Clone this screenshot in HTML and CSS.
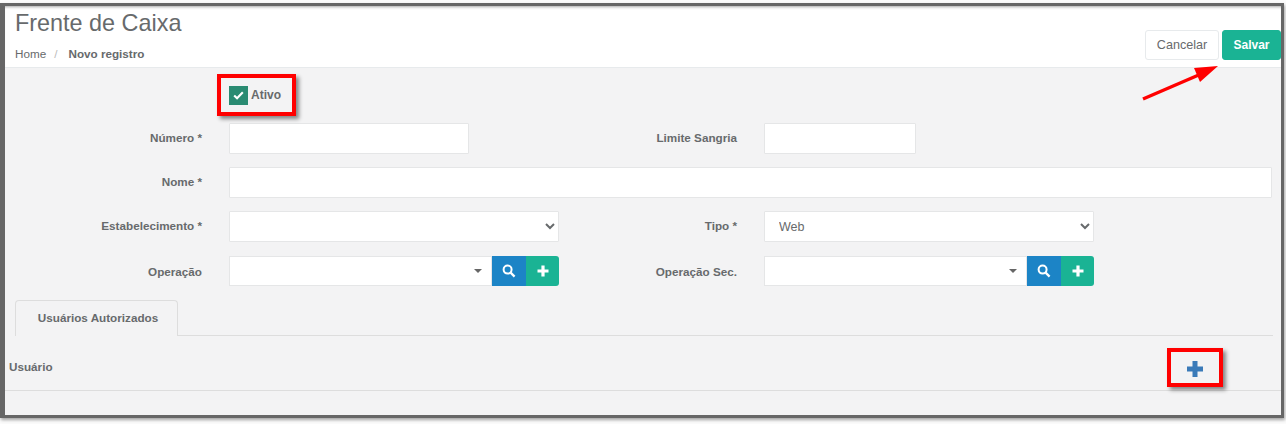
FILE: index.html
```html
<!DOCTYPE html>
<html lang="pt">
<head>
<meta charset="utf-8">
<title>Frente de Caixa</title>
<link rel="stylesheet" href="styles.css">
</head>
<body>
<div class="frame">
  <header class="top">
    <div class="top-text">
      <h1 class="title">Frente de Caixa</h1>
      <nav class="crumbs"><span>Home</span><span class="sep">/</span><strong>Novo registro</strong></nav>
    </div>
    <div class="actions">
      <button class="btn btn-cancel">Cancelar</button>
      <button class="btn btn-save">Salvar</button>
    </div>
  </header>
  <main class="content">
    <div class="check-row">
      <span class="check"><svg viewBox="0 0 12 10" width="11" height="9"><path d="M1.2 5 4.4 8 10.8 1.5" fill="none" stroke="#fff" stroke-width="2.4"/></svg></span>
      <span class="check-label">Ativo</span>
    </div>
    <div class="row">
      <div class="col">
        <label class="label">Número *</label>
        <input class="input w240" type="text">
      </div>
      <div class="col">
        <label class="label">Limite Sangria</label>
        <input class="input w152" type="text">
      </div>
    </div>
    <div class="row">
      <label class="label">Nome *</label>
      <input class="input w1043" type="text">
    </div>
    <div class="row row-sel">
      <div class="col">
        <label class="label">Estabelecimento *</label>
        <select class="input select"><option></option></select>
      </div>
      <div class="col">
        <label class="label">Tipo *</label>
        <select class="input select"><option>Web</option></select>
      </div>
    </div>
    <div class="row row-op">
      <div class="col">
        <label class="label">Operação</label>
        <div class="combo">
          <div class="combo-box"><span class="caret"></span></div>
          <button class="ic ic-blue"><svg viewBox="0 0 14 14" width="14" height="14"><circle cx="5.6" cy="5.6" r="4" fill="none" stroke="#fff" stroke-width="2"/><path d="M8.6 8.6 12.6 12.6" stroke="#fff" stroke-width="2.2"/></svg></button>
          <button class="ic ic-green"><svg viewBox="0 0 12 12" width="12" height="12"><path d="M6 .5v11M.5 6h11" stroke="#fff" stroke-width="3.2"/></svg></button>
        </div>
      </div>
      <div class="col">
        <label class="label">Operação Sec.</label>
        <div class="combo">
          <div class="combo-box"><span class="caret"></span></div>
          <button class="ic ic-blue"><svg viewBox="0 0 14 14" width="14" height="14"><circle cx="5.6" cy="5.6" r="4" fill="none" stroke="#fff" stroke-width="2"/><path d="M8.6 8.6 12.6 12.6" stroke="#fff" stroke-width="2.2"/></svg></button>
          <button class="ic ic-green"><svg viewBox="0 0 12 12" width="12" height="12"><path d="M6 .5v11M.5 6h11" stroke="#fff" stroke-width="3.2"/></svg></button>
        </div>
      </div>
    </div>
    <div class="tabs"><div class="tab">Usuários Autorizados</div></div>
    <div class="table-row">
      <span class="th">Usuário</span>
      <svg class="plus" viewBox="0 0 18 18" width="18" height="18"><path d="M9 1v16M1 9h16" stroke="#3a7ab8" stroke-width="5"/></svg>
    </div>
  </main>
</div>
<div class="mark mark-ativo"></div>
<div class="mark mark-plus"></div>
<svg class="arrow" viewBox="0 0 90 40" width="90" height="40"><path d="M2 35 60 10" stroke="#f00" stroke-width="3.4" fill="none"/><path d="M77 2 53 4 59 18Z" fill="#f00"/></svg>
</body>
</html>
```

FILE: styles.css
```css
* { box-sizing: border-box; }
html, body { margin: 0; padding: 0; background: #fbfbfb; }
body {
  width: 1286px;
  height: 424px;
  overflow: hidden;
  font-family: "Liberation Sans", Arial, sans-serif;
  font-size: 11.7px;
  color: #676a6c;
  padding: 3px 2px 6px 0;
}
.frame {
  height: 415px;
  border-style: solid;
  border-color: #666;
  border-width: 3px 3px 3px 5px;
  background: #f3f3f4;
  box-shadow: 1px 2px 3px rgba(0, 0, 0, .35);
  overflow: hidden;
}
.top {
  height: 62px;
  background: #fff;
  border-bottom: 1px solid #e7eaec;
  display: flex;
  justify-content: space-between;
  padding-left: 10px;
  box-shadow: inset 0 3px 3px -2px rgba(0, 0, 0, .35);
}
.title {
  margin: 4px 0 0;
  font-size: 23.4px;
  line-height: 27px;
  font-weight: 400;
}
.crumbs { margin-top: 10px; line-height: 14px; display: flex; }
.sep { color: #bbb; margin: 0 11px 0 8px; }
.crumbs strong { font-weight: 700; }
.actions { display: flex; gap: 3px; padding-top: 24px; }
.btn {
  height: 30px;
  font-family: inherit;
  border-radius: 3px;
  border: 1px solid #e7eaec;
  padding: 0 0 1px;
}
.btn-cancel { width: 74px; background: #fff; color: #676a6c; font-size: 12.6px; }
.btn-save { width: 59px; background: #1ab394; border-color: #1ab394; color: #fff; font-size: 12px; font-weight: 700; }
.check-row { display: flex; align-items: flex-start; padding: 18px 0 0 224px; height: 55px; }
.check {
  width: 19px;
  height: 19px;
  background: #2a8b72;
  display: flex;
  align-items: center;
  justify-content: center;
}
.check-label { font-weight: 700; margin-left: 3px; line-height: 18px; font-size: 12px; }
.row { display: flex; align-items: center; height: 31px; margin-bottom: 13px; }
.row-sel { margin-bottom: 14px; }
.row-op { height: 30px; margin-bottom: 14px; }
.col { display: flex; align-items: center; width: 535px; }
.label {
  width: 197px;
  margin-right: 27px;
  text-align: right;
  font-weight: 700;
  flex: none;
  padding-bottom: 2px;
}
.row-op .label { padding-bottom: 0; }
.input {
  height: 31px;
  flex: none;
  background: #fff;
  border: 1px solid #e5e6e7;
  padding: 0 13px;
  font-family: inherit;
  font-size: 12px;
  color: #676a6c;
  border-radius: 1px;
}
.w240 { width: 240px; }
.w152 { width: 152px; }
.w1043 { width: 1043px; }
.select { width: 330px; padding: 0 10px; font-size: 12.5px; }
.combo { display: flex; flex: none; width: 330px; height: 30px; }
.combo-box {
  width: 263px;
  background: #fff;
  border: 1px solid #e5e6e7;
  display: flex;
  align-items: center;
  justify-content: flex-end;
  padding-right: 9px;
}
.caret {
  width: 0;
  height: 0;
  border-left: 4px solid transparent;
  border-right: 4px solid transparent;
  border-top: 4px solid #666;
}
.ic { border: 0; padding: 0; display: flex; align-items: center; justify-content: center; height: 30px; }
.ic-blue { width: 34px; background: #1c84c6; }
.ic-green { width: 33px; background: #1ab394; border-radius: 0 3px 3px 0; }
.tabs {
  margin: 0 8px 0 10px;
  height: 36px;
  border-bottom: 1px solid #ddd;
}
.tab {
  width: 163px;
  height: 36px;
  border: 1px solid #ddd;
  border-bottom: 0;
  border-radius: 4px 4px 0 0;
  background: #f3f3f4;
  font-weight: 700;
  text-align: center;
  line-height: 33px;
  padding-left: 3px;
}
.table-row {
  height: 55px;
  border-bottom: 1px solid #ddd;
  display: flex;
  align-items: center;
  padding-left: 4px;
  justify-content: space-between;
  padding-right: 77px;
}
.th { font-weight: 700; position: relative; top: 3px; }
.plus { position: relative; top: 6px; }
.mark {
  position: absolute;
  border: 4px solid #f00;
  box-shadow: 3px 3px 4px rgba(0, 0, 0, .45);
}
.mark-ativo { left: 217px; top: 74px; width: 79px; height: 42px; }
.mark-plus { left: 1167px; top: 348px; width: 56px; height: 39px; }
.arrow { position: absolute; left: 1141px; top: 64px; }
```
